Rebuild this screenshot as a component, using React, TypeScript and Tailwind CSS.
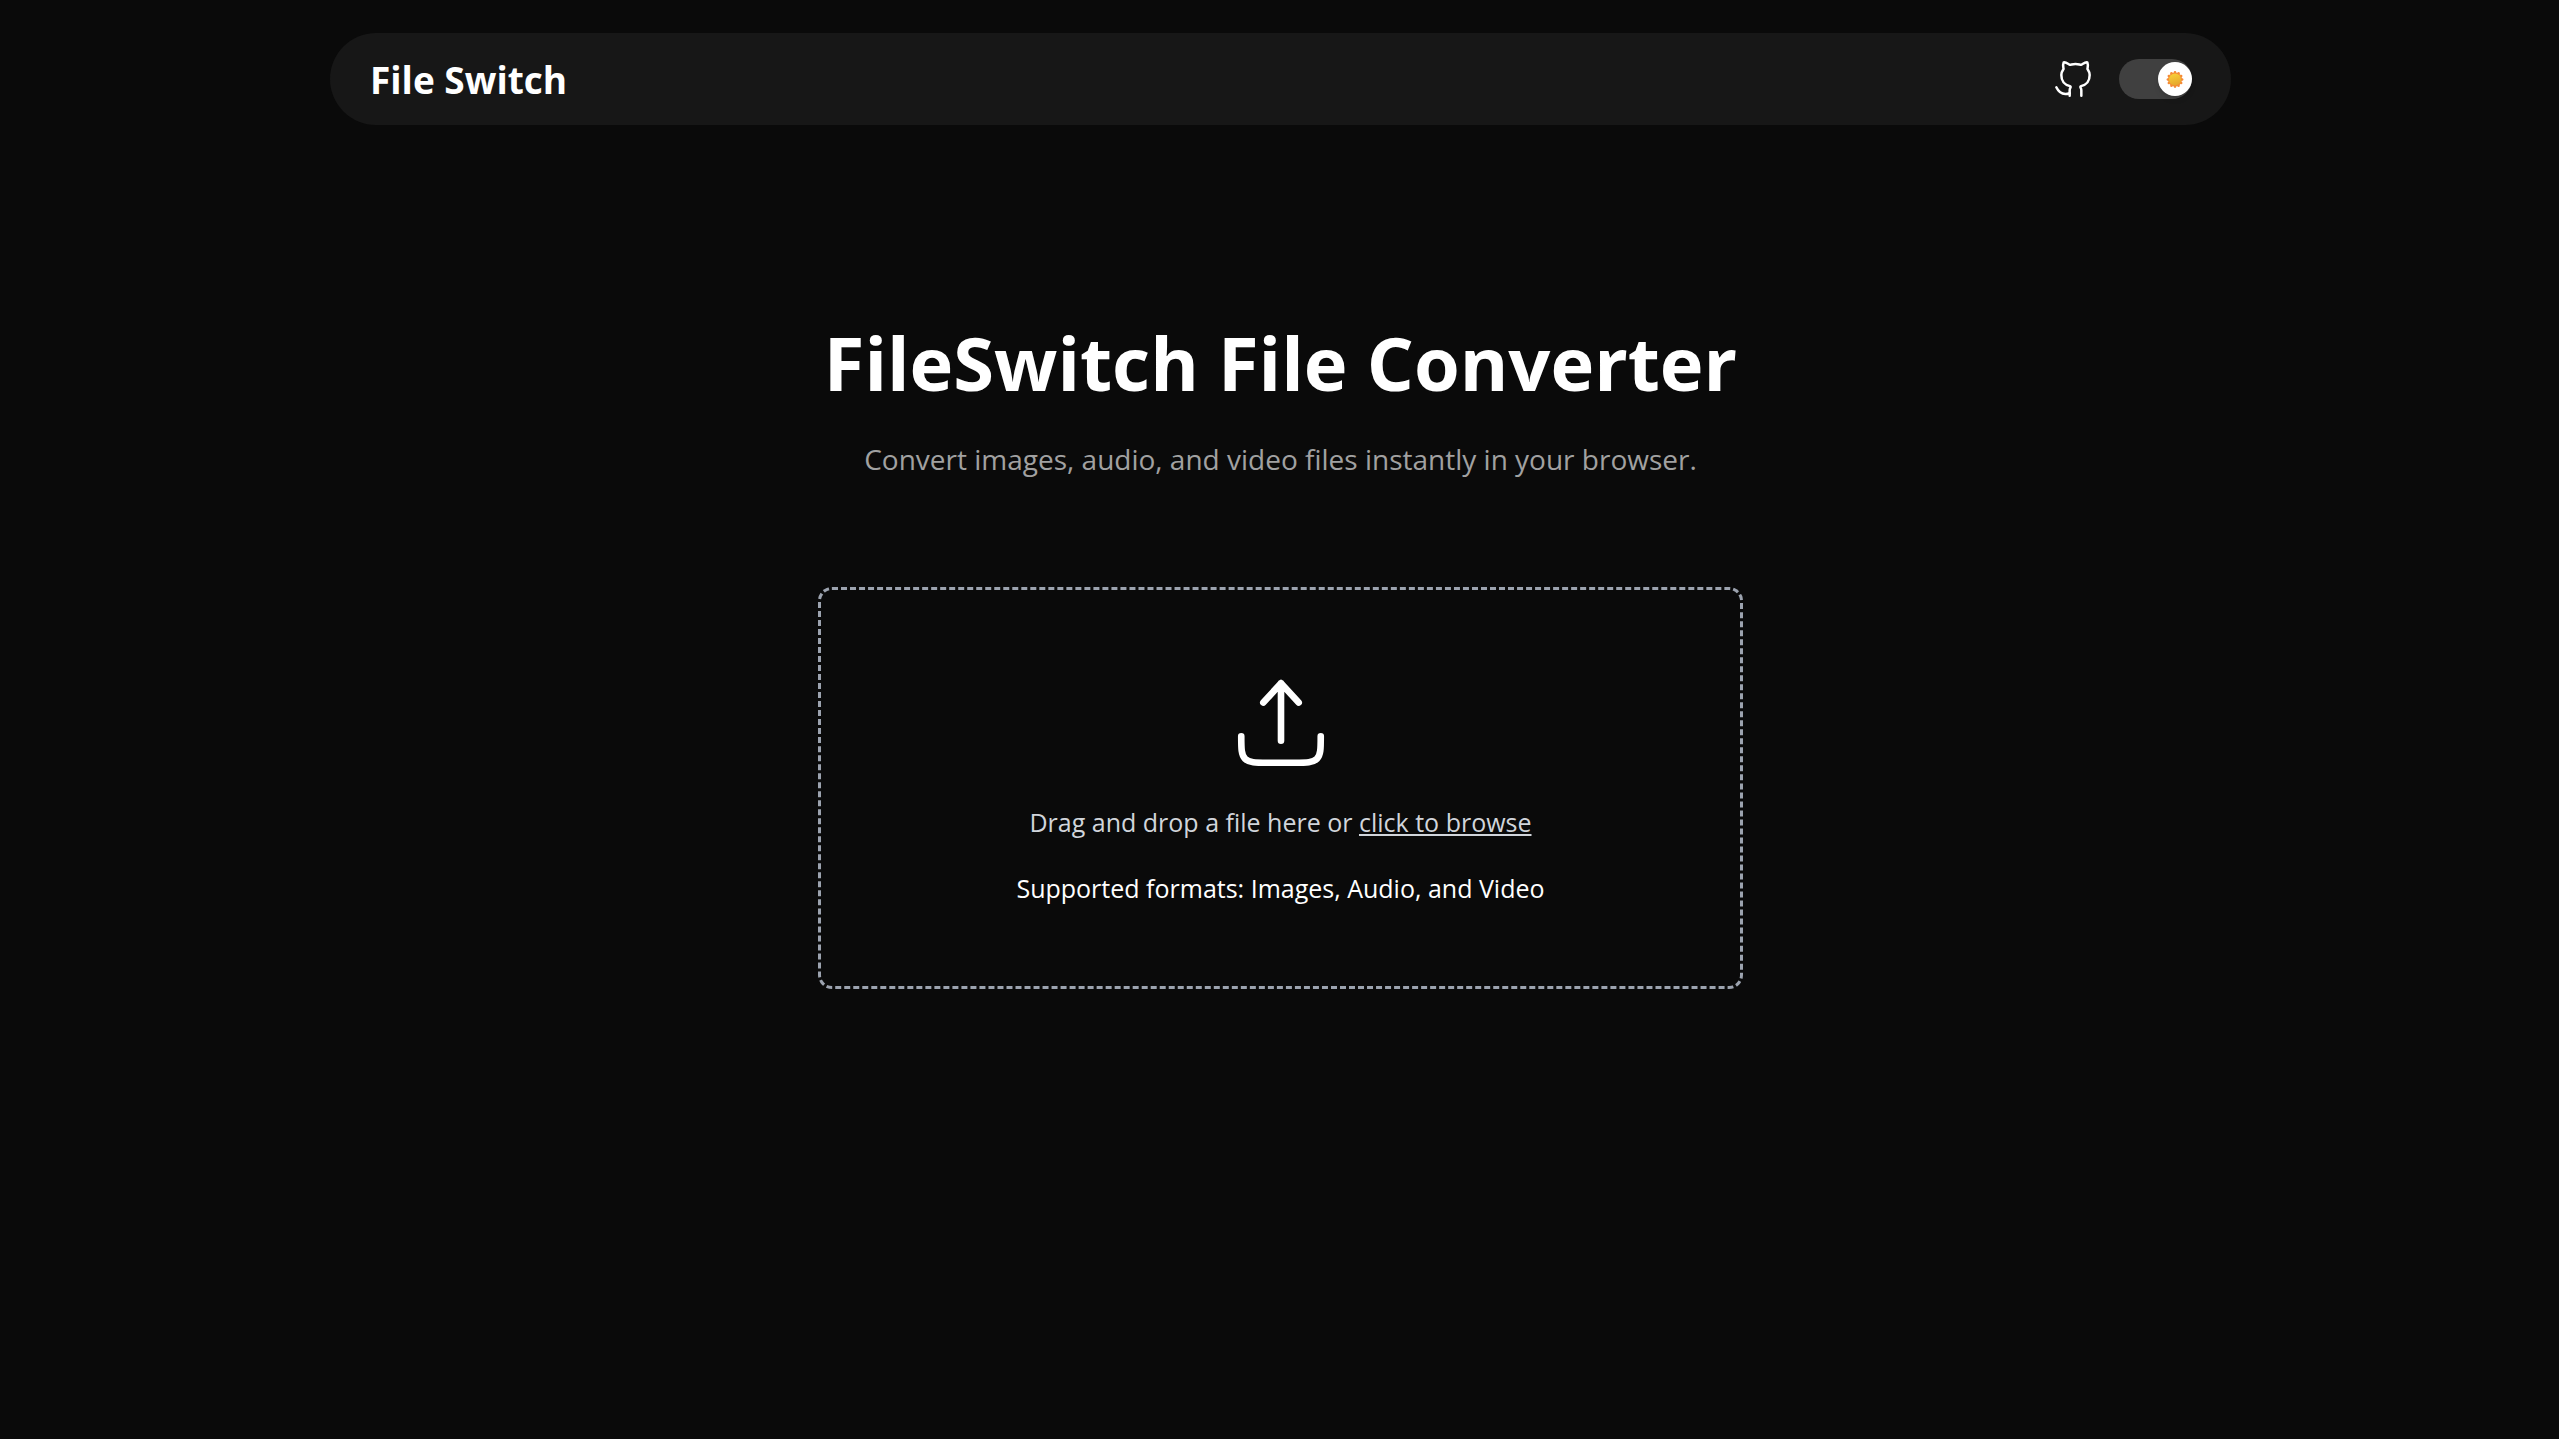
import { useState } from 'react';

function GithubIcon() {
  return (
    <svg className="size-10" viewBox="0 0 24 24" fill="none" stroke="currentColor" strokeWidth="1.5" strokeLinecap="round" strokeLinejoin="round" aria-hidden="true">
      <path d="M10 20.5675C6.57143 21.7248 3.71429 20.5675 2 17" />
      <path d="M10 22V18.7579C10 18.1596 10.1839 17.6396 10.4804 17.1699C10.6838 16.8476 10.5445 16.3904 10.1771 16.2894C7.13394 15.4528 5 14.1077 5 9.64606C5 8.48611 5.38005 7.39556 6.04811 6.4464C6.21437 6.21018 6.29749 6.09208 6.31748 5.9851C6.33746 5.87813 6.30272 5.73852 6.23322 5.45932C5.95038 4.32292 5.96871 3.11619 6.39322 2.02823C6.39322 2.02823 7.27042 1.74242 9.26698 2.98969C9.72282 3.27447 9.95075 3.41686 10.1515 3.44871C10.3522 3.48056 10.6206 3.41384 11.1573 3.28041C11.8913 3.09795 12.6476 3 13.5 3C14.3524 3 15.1087 3.09795 15.8427 3.28041C16.3794 3.41384 16.6478 3.48056 16.8485 3.44871C17.0493 3.41686 17.2772 3.27447 17.733 2.98969C19.7296 1.74242 20.6068 2.02823 20.6068 2.02823C21.0313 3.11619 21.0496 4.32292 20.7668 5.45932C20.6973 5.73852 20.6625 5.87813 20.6825 5.9851C20.7025 6.09208 20.7856 6.21018 20.9519 6.4464C21.6199 7.39556 22 8.48611 22 9.64606C22 14.1077 19.8661 15.4528 16.8229 16.2894C16.4555 16.3904 16.3162 16.8476 16.5196 17.1699C16.8161 17.6396 17 18.1596 17 18.7579V22" />
    </svg>
  );
}

function UploadIcon() {
  return (
    <svg className="size-[106px] text-white" viewBox="0 0 24 24" fill="none" stroke="currentColor" strokeWidth="1.5" strokeLinecap="round" strokeLinejoin="round" aria-hidden="true">
      <path d="M3 15C3 17.8284 3 19.2426 3.87868 20.1213C4.75736 21 6.17157 21 9 21H15C17.8284 21 19.2426 21 20.1213 20.1213C21 19.2426 21 17.8284 21 15" />
      <path d="M12 16V3M12 3L16 7.375M12 3L8 7.375" />
    </svg>
  );
}

function SunIcon() {
  const petals = Array.from({ length: 12 }, (_, i) => (i * Math.PI) / 6);
  return (
    <svg className="size-5" viewBox="0 0 20 20" aria-hidden="true">
      <defs>
        <linearGradient id="sun-disc" x1="0.3" y1="0" x2="0.6" y2="1">
          <stop offset="0" stopColor="#f8d038" />
          <stop offset="1" stopColor="#e5a52c" />
        </linearGradient>
      </defs>
      <circle cx="10" cy="10.5" r="7" fill="#f58a35" />
      {petals.map((a) => (
        <circle key={a} cx={10 + 7.1 * Math.cos(a)} cy={10.5 + 7.1 * Math.sin(a)} r="1.3" fill="#f58a35" />
      ))}
      <circle cx="10" cy="10.5" r="6.1" fill="url(#sun-disc)" />
    </svg>
  );
}

function ThemeToggle({ light, onToggle }: { light: boolean; onToggle: () => void }) {
  return (
    <button
      type="button"
      role="switch"
      aria-checked={light}
      aria-label="Toggle theme"
      onClick={onToggle}
      className={`flex h-10 w-[73px] cursor-pointer items-center rounded-full bg-[#404040] ${light ? 'justify-start' : 'justify-end'}`}
    >
      <span className="flex size-[34px] items-center justify-center rounded-full bg-white shadow-md">
        <SunIcon />
      </span>
    </button>
  );
}

function Header() {
  const [light, setLight] = useState(false);
  return (
    <header className="mx-auto flex h-[92px] w-full max-w-[1901px] items-center justify-between rounded-full bg-[#171717] pr-[39px] pl-10">
      <a href="#" className="pt-0.5 text-[37px] leading-[56px] font-bold">File Switch</a>
      <div className="flex items-center gap-[26px]">
        <a href="#github" aria-label="GitHub repository"><GithubIcon /></a>
        <ThemeToggle light={light} onToggle={() => setLight(!light)} />
      </div>
    </header>
  );
}

export default function App() {
  return (
    <div className="min-h-screen bg-[#0a0a0a] pt-[33px] pr-10 pl-[42px] font-['Open_Sans',sans-serif] text-white">
      <Header />
      <main className="mx-auto flex w-full max-w-[925px] flex-col items-center pt-[198px] text-center">
        <h1 className="text-[74px] leading-[80px] font-bold whitespace-nowrap">FileSwitch File Converter</h1>
        <p className="mt-[33px] text-[28px] leading-[46px] whitespace-nowrap text-[#a1a1a1]">
          Convert images, audio, and video files instantly in your browser.
        </p>
        <section className="mt-[105px] flex w-full flex-col items-center rounded-[14px] border-3 border-dashed border-[#9ca3af] px-10 pt-20 pb-[78px]">
          <UploadIcon />
          <p className="mt-[26px] text-[25px] leading-10 text-[#d1d5db]">
            Drag and drop a file here or{' '}
            <label htmlFor="file-input" className="cursor-pointer underline">click to browse</label>
          </p>
          <input id="file-input" type="file" className="sr-only" />
          <p className="mt-[26px] text-[25px] leading-10">Supported formats: Images, Audio, and Video</p>
        </section>
      </main>
    </div>
  );
}
